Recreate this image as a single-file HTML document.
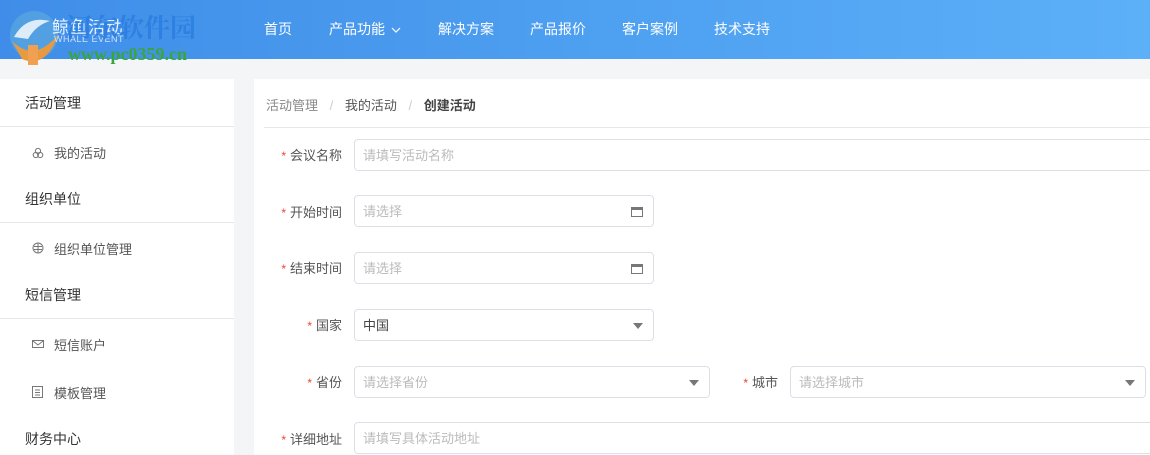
<!DOCTYPE html>
<html><head><meta charset="utf-8"><style>
*{margin:0;padding:0;box-sizing:border-box}
body{width:1150px;height:455px;overflow:hidden;background:#f4f5f7;font-family:"Liberation Sans","Noto Sans CJK SC",sans-serif;position:relative}
.a{position:absolute;white-space:nowrap}
#hd{left:0;top:0;width:1150px;height:59px;background:linear-gradient(90deg,#3f8de8 0%,#4d9ff0 50%,#5cb0f8 100%)}
.nav{color:#fff;font-size:14px;top:19px}
#sb{left:0;top:79px;width:234px;height:376px;background:#fff}
.g{font-size:14px;color:#333;left:25px}
.s{font-size:13px;color:#555;left:54px}
.hr{height:1px;background:#e8e8e8}
#mn{left:254px;top:79px;width:896px;height:376px;background:#fff}
.lb{font-size:13px;color:#555;text-align:right;width:100px}
.lb b{color:#f04134;font-weight:normal;margin-right:4px;font-size:12px}
.in{border:1px solid #dcdfe6;border-radius:4px;height:32px;background:#fff;font-size:13px;color:#bbb;padding:5px 8px 0}
.ar{position:absolute;right:10px;top:13px;width:0;height:0;border-left:5px solid transparent;border-right:5px solid transparent;border-top:6px solid #777}
.cal{position:absolute;right:10px;top:11px;width:12px;height:10px;border:1px solid #777;border-top-width:3px}
.ic{position:absolute;left:32px}
</style></head><body>
<div class="a" id="hd"></div>
<svg class="a" style="left:6px;top:5px" width="60" height="62" viewBox="0 0 60 62">
<circle cx="28" cy="30" r="24" fill="#5aa8e0" opacity=".7"/>
<path d="M6 36 Q28 58 52 30 Q40 64 16 54Z" fill="#e89a40"/>
<path d="M8 32 Q20 10 44 16 Q30 20 22 34Z" fill="#fff" opacity=".8"/>
<rect x="22" y="40" width="10" height="20" fill="#f0a050"/>
</svg>
<div class="a" style="left:52px;top:13px;font-size:17px;color:#e8f2ff;letter-spacing:1px">鲸鱼活动</div>
<div class="a" style="left:54px;top:34px;font-size:9px;color:#cfe3ff;letter-spacing:.5px">WHALE EVENT</div>
<div class="a" style="left:66px;top:8px;font-size:26px;font-weight:bold;color:#2a7ee0;opacity:.85;font-family:'Noto Serif CJK SC',serif">河东软件园</div>
<div class="a" style="left:68px;top:44px;font-size:18px;font-weight:bold;color:#3aa53a;font-family:'Liberation Serif',serif">www.pc0359.cn</div>
<div class="a nav" style="left:264px">首页</div>
<div class="a nav" style="left:329px">产品功能 <svg width="10" height="8" viewBox="0 0 10 8" style="margin-left:2px"><path d="M1 2 L5 6 L9 2" stroke="#fff" fill="none" stroke-width="1.2"/></svg></div>
<div class="a nav" style="left:438px">解决方案</div>
<div class="a nav" style="left:530px">产品报价</div>
<div class="a nav" style="left:622px">客户案例</div>
<div class="a nav" style="left:714px">技术支持</div>

<div class="a" id="sb"></div>
<div class="a g" style="top:93px">活动管理</div>
<div class="a hr" style="left:0;top:126px;width:234px"></div>
<svg class="a ic" style="top:147px" width="12" height="12" viewBox="0 0 12 12"><g fill="none" stroke="#777"><circle cx="6" cy="4" r="2.6"/><circle cx="3.8" cy="8" r="2.6"/><circle cx="8.2" cy="8" r="2.6"/></g></svg>
<div class="a s" style="top:143px">我的活动</div>
<div class="a g" style="top:189px">组织单位</div>
<div class="a hr" style="left:0;top:222px;width:234px"></div>
<svg class="a ic" style="top:242px" width="12" height="12" viewBox="0 0 12 12"><g fill="none" stroke="#777"><circle cx="6" cy="6" r="5"/><path d="M2 4.5H10M2 7.5H10M6 1V11"/></g></svg>
<div class="a s" style="top:239px">组织单位管理</div>
<div class="a g" style="top:285px">短信管理</div>
<div class="a hr" style="left:0;top:318px;width:234px"></div>
<svg class="a ic" style="top:339px" width="12" height="10" viewBox="0 0 12 10"><g fill="none" stroke="#777"><rect x=".5" y="1.5" width="11" height="7"/><path d="M1 2L6 6L11 2"/></g></svg>
<div class="a s" style="top:335px">短信账户</div>
<svg class="a ic" style="top:386px" width="11" height="12" viewBox="0 0 11 12"><g fill="none" stroke="#777"><rect x=".5" y=".5" width="10" height="11"/><path d="M3 4H8M3 6.5H8M3 9H8"/></g></svg>
<div class="a s" style="top:383px">模板管理</div>
<div class="a g" style="top:429px">财务中心</div>

<div class="a" id="mn"></div>
<div class="a" style="left:266px;top:95px;font-size:13px;color:#888">活动管理 <span style="color:#ccc;margin:0 8px">/</span> <span style="color:#555">我的活动</span> <span style="color:#ccc;margin:0 8px">/</span> <b style="color:#444">创建活动</b></div>
<div class="a hr" style="left:264px;top:127px;width:886px"></div>

<div class="a lb" style="left:242px;top:145px"><b>*</b>会议名称</div>
<div class="a in" style="left:354px;top:139px;width:810px">请填写活动名称</div>
<div class="a lb" style="left:242px;top:202px"><b>*</b>开始时间</div>
<div class="a in" style="left:354px;top:195px;width:300px">请选择<span class="cal"></span></div>
<div class="a lb" style="left:242px;top:258px"><b>*</b>结束时间</div>
<div class="a in" style="left:354px;top:252px;width:300px">请选择<span class="cal"></span></div>
<div class="a lb" style="left:242px;top:315px"><b>*</b>国家</div>
<div class="a in" style="left:354px;top:309px;width:300px;color:#444">中国<span class="ar"></span></div>
<div class="a lb" style="left:242px;top:372px"><b>*</b>省份</div>
<div class="a in" style="left:354px;top:366px;width:356px">请选择省份<span class="ar"></span></div>
<div class="a lb" style="left:678px;top:372px"><b>*</b>城市</div>
<div class="a in" style="left:790px;top:366px;width:356px">请选择城市<span class="ar"></span></div>
<div class="a lb" style="left:242px;top:429px"><b>*</b>详细地址</div>
<div class="a in" style="left:354px;top:422px;width:810px">请填写具体活动地址</div>
</body></html>
